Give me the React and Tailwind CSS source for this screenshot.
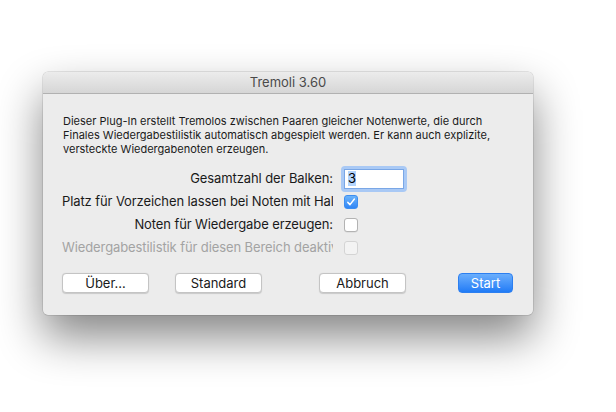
import React from "react";

const font = { fontFamily: "Inter, 'Noto Sans', sans-serif" };

function Check({ checked, disabled }) {
  if (checked) {
    return (
      <div className="w-[14px] h-[14px] rounded-[3px] bg-gradient-to-b from-[#6cb3fa] to-[#2f86f6] border border-[#3d8ef0] flex items-center justify-center">
        <svg width="10" height="10" viewBox="0 0 10 10">
          <path d="M1.8 5.4 L4 7.6 L8.4 2" fill="none" stroke="white" strokeWidth="1.5" strokeLinecap="round" strokeLinejoin="round" />
        </svg>
      </div>
    );
  }
  return (
    <div
      className={
        disabled
          ? "w-[14px] h-[14px] rounded-[3px] bg-[#f3f3f3] border border-[#d4d4d4]"
          : "w-[14px] h-[14px] rounded-[3px] bg-white border border-[#b3b3b3] shadow-[0_0.5px_0.5px_rgba(0,0,0,0.1)]"
      }
    />
  );
}

function Btn({ children, primary, className = "" }) {
  return (
    <div
      className={
        (primary
          ? "bg-gradient-to-b from-[#6aaefc] to-[#1f7bf6] text-white border border-[#2c7ff0] "
          : "bg-white text-[#1a1a1a] border border-[#c4c4c4] shadow-[0_0.5px_1px_rgba(0,0,0,0.15)] ") +
        "h-[20px] rounded-[4px] flex items-center justify-center text-[13px] leading-none " +
        className
      }
    >
      {children}
    </div>
  );
}

function Row({ label, disabled, children }) {
  return (
    <div className="flex items-center h-[23px]">
      <div
        className={
          "w-[271px] overflow-hidden whitespace-nowrap text-right text-[13px] tracking-[-0.1px] " +
          (disabled ? "text-[#a3a3a3]" : "text-[#1a1a1a]")
        }
      >
        {label}
      </div>
      <div className="ml-[11px] flex items-center">{children}</div>
    </div>
  );
}

export default function App() {
  return (
    <div className="w-[616px] h-[412px] bg-white overflow-hidden" style={font}>
      <div className="ml-[43px] mt-[72px] w-[490px] h-[243px] rounded-[5px] bg-[#ececec] shadow-[0_22px_45px_rgba(0,0,0,0.48),0_0_0_0.5px_rgba(0,0,0,0.18)] flex flex-col overflow-hidden">
        <div className="h-[22px] shrink-0 bg-gradient-to-b from-[#ececec] to-[#d6d6d6] border-b border-[#b1b1b1] flex items-center justify-center text-[13px] text-[#4a4a4a]">
          Tremoli 3.60
        </div>
        <div className="pl-[20px] pr-[20px] pt-[20px] text-[11px] leading-[14px] text-[#1a1a1a]">
          Dieser Plug-In erstellt Tremolos zwischen Paaren gleicher Notenwerte, die durch
          <br />
          Finales Wiedergabestilistik automatisch abgespielt werden. Er kann auch explizite,
          <br />
          versteckte Wiedergabenoten erzeugen.
        </div>
        <div className="pl-[19px] mt-[11px] flex flex-col">
          <Row label="Gesamtzahl der Balken:">
            <div className="rounded-[4px] p-[3px] bg-[#a9c9f5] -ml-[3px]">
              <div className="w-[60px] h-[20px] bg-white border border-[#7aa7e6] flex items-center pl-[3px] text-[13px]">
                <span className="bg-[#b3d4fc] leading-[15px]">3</span>
              </div>
            </div>
          </Row>
          <Row label="Platz für Vorzeichen lassen bei Noten mit Halsen">
            <Check checked />
          </Row>
          <Row label="Noten für Wiedergabe erzeugen:">
            <Check />
          </Row>
          <Row label="Wiedergabestilistik für diesen Bereich deaktivieren" disabled>
            <Check disabled />
          </Row>
        </div>
        <div className="flex items-center pl-[19px] mt-[14px]">
          <Btn className="w-[87px]">Über...</Btn>
          <Btn className="w-[87px] ml-[26px]">Standard</Btn>
          <Btn className="w-[87px] ml-[57px]">Abbruch</Btn>
          <Btn primary className="w-[55px] ml-[52px]">Start</Btn>
        </div>
      </div>
    </div>
  );
}
